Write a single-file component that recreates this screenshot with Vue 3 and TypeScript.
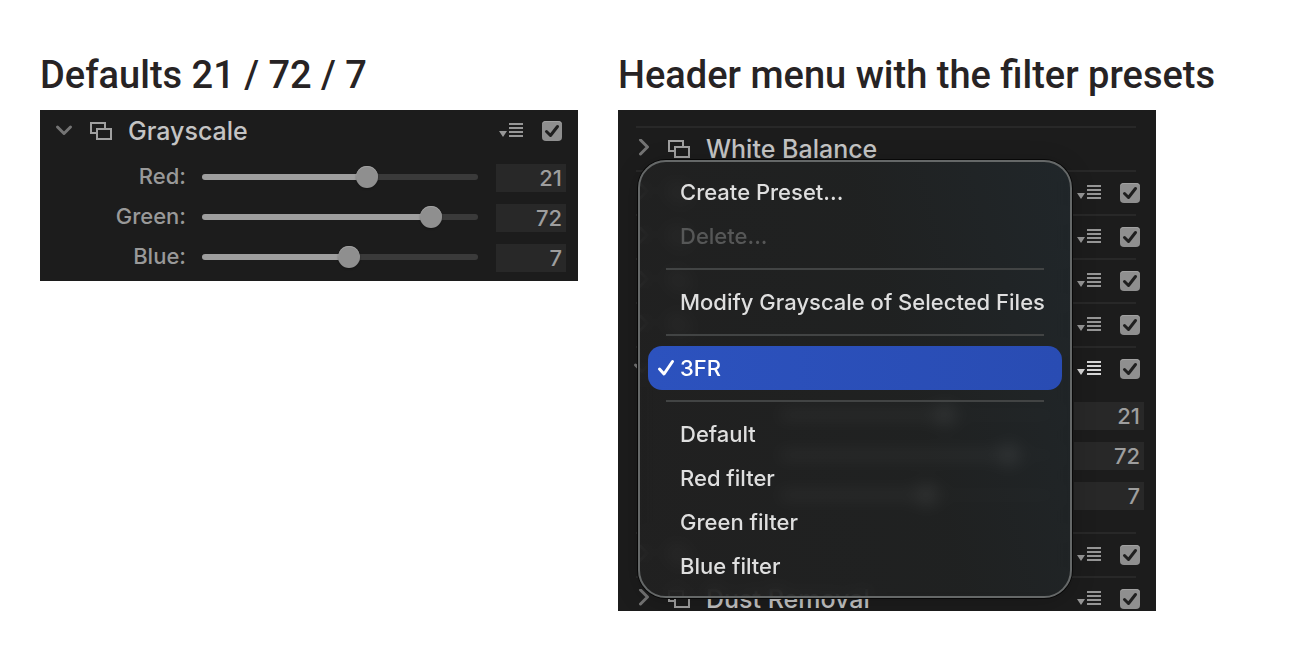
<script setup lang="ts">
import { reactive } from 'vue'

interface Channel {
  name: string
  value: number
}

interface Module {
  id: string
  title?: string
  open?: boolean
  active?: boolean
  bare?: boolean
  enabled: boolean
  labelled?: boolean
  channels?: Channel[]
}

interface Figure {
  id: string
  heading: string
  ruled: boolean
  menu: boolean
  modules: Module[]
}

interface MenuEntry {
  label: string
  disabled?: boolean
  checked?: boolean
}

const MIN = -100
const MAX = 100

const defaults = (): Channel[] => [
  { name: 'Red', value: 21 },
  { name: 'Green', value: 72 },
  { name: 'Blue', value: 7 },
]

const figures = reactive<Figure[]>([
  {
    id: 'defaults',
    heading: 'Defaults 21 / 72 / 7',
    ruled: false,
    menu: false,
    modules: [
      { id: 'gray', title: 'Grayscale', open: true, enabled: true, labelled: true, channels: defaults() },
    ],
  },
  {
    id: 'presets',
    heading: 'Header menu with the filter presets',
    ruled: true,
    menu: true,
    modules: [
      { id: 'wb', title: 'White Balance', bare: true, enabled: true },
      { id: 'm2', enabled: true },
      { id: 'm3', enabled: true },
      { id: 'm4', enabled: true },
      { id: 'm5', enabled: true },
      { id: 'gray', open: true, active: true, enabled: true, channels: defaults() },
      { id: 'm7', enabled: true },
      { id: 'dust', title: 'Dust Removal', enabled: true },
    ],
  },
])

const menuGroups: MenuEntry[][] = [
  [{ label: 'Create Preset...' }, { label: 'Delete...', disabled: true }],
  [{ label: 'Modify Grayscale of Selected Files' }],
  [{ label: '3FR', checked: true }],
  [{ label: 'Default' }, { label: 'Red filter' }, { label: 'Green filter' }, { label: 'Blue filter' }],
]

const fill = (value: number) => `${((value - MIN) / (MAX - MIN)) * 100}%`
</script>

<template>
  <main class="page">
    <section v-for="figure in figures" :key="figure.id" class="figure">
      <h2 class="heading">{{ figure.heading }}</h2>
      <div class="panel" :class="{ ruled: figure.ruled }">
        <div v-for="mod in figure.modules" :key="mod.id" class="module">
          <header class="bar">
            <button type="button" class="icon-button toggle" :aria-expanded="!!mod.open" aria-label="Toggle section">
              <svg v-if="mod.open" width="20" height="20" viewBox="0 0 20 20">
                <path d="M3.5 6 L10 12.5 L16.5 6" />
              </svg>
              <svg v-else width="20" height="20" viewBox="0 0 20 20">
                <path d="M8.5 1 L15.5 8 L8.5 15" />
              </svg>
            </button>
            <svg class="layers" width="22" height="18" viewBox="0 0 22 18" aria-hidden="true">
              <path d="M15 6 V1 H1 V11 H6" />
              <rect x="7" y="7" width="14" height="10" />
            </svg>
            <h3 class="title">{{ mod.title }}</h3>
            <template v-if="!mod.bare">
              <button type="button" class="icon-button presets" :class="{ active: mod.active }" aria-label="Presets">
                <svg width="24" height="16" viewBox="0 0 24 16">
                  <path d="M0 8 H8 L4 14 Z M10 0 H24 V2 H10 Z M10 4 H24 V6 H10 Z M10 8 H24 V10 H10 Z M10 12 H24 V14 H10 Z" />
                </svg>
              </button>
              <label class="tick">
                <input v-model="mod.enabled" type="checkbox" aria-label="Enable section" />
                <svg width="20" height="20" viewBox="0 0 20 20" aria-hidden="true">
                  <path d="M4.5 10.5 L8.5 14.5 L15.5 5.5" />
                </svg>
              </label>
            </template>
          </header>

          <div v-if="mod.channels" class="channels">
            <div v-for="channel in mod.channels" :key="channel.name" class="channel">
              <label class="name" :for="`${figure.id}-${channel.name}`">
                <template v-if="mod.labelled">{{ channel.name }}:</template>
              </label>
              <input
                :id="`${figure.id}-${channel.name}`"
                v-model.number="channel.value"
                class="slider"
                type="range"
                :min="MIN"
                :max="MAX"
                :aria-label="channel.name"
                :style="{ '--fill': fill(channel.value) }"
              />
              <input v-model.number="channel.value" class="value" type="text" :aria-label="`${channel.name} value`" />
            </div>
          </div>
        </div>

        <div v-if="figure.menu" class="menu" role="menu">
          <div v-for="(group, index) in menuGroups" :key="index" class="group" role="group">
            <button
              v-for="entry in group"
              :key="entry.label"
              type="button"
              role="menuitem"
              class="entry"
              :class="{ selected: entry.checked }"
              :disabled="entry.disabled"
            >
              <svg v-if="entry.checked" class="mark" width="18" height="20" viewBox="0 0 18 20" aria-hidden="true">
                <path d="M2.5 11 L7 16 L15.5 3.5" />
              </svg>
              {{ entry.label }}
            </button>
          </div>
        </div>
      </div>
    </section>
  </main>
</template>

<style>
body {
  margin: 0;
  background: #ffffff;
}
</style>

<style scoped>
.page {
  display: flex;
  align-items: flex-start;
  gap: 40px;
  padding: 50px 40px 40px;
  font-family: Inter, "Liberation Sans", sans-serif;
}

.figure {
  flex: 1 1 0;
  min-width: 0;
  max-width: 538px;
}

.heading {
  margin: 0 0 10px;
  color: #272324;
  font-family: Roboto, "Liberation Sans", sans-serif;
  font-size: 38px;
  font-weight: 500;
  line-height: 50px;
  white-space: nowrap;
}

.panel {
  position: relative;
  overflow: hidden;
  padding-bottom: 3px;
  background: #1c1c1c;
}

.panel.ruled {
  padding-top: 16px;
  padding-bottom: 0;
}

.ruled .module::before {
  content: "";
  display: block;
  height: 2px;
  margin: 0 20px 0 18px;
  background: #282828;
}

.ruled .module:nth-last-child(2) {
  margin-bottom: -9px;
}

.bar {
  display: flex;
  align-items: center;
  height: 42px;
  padding: 0 16px 0 14px;
}

.icon-button {
  display: flex;
  padding: 0;
  border: 0;
  background: none;
}

.toggle svg {
  fill: none;
  stroke: #747474;
  stroke-width: 3;
  stroke-linecap: round;
  stroke-linejoin: round;
}

.layers {
  margin: 0 16px;
  fill: none;
  stroke: #a0a0a0;
  stroke-width: 2;
}

.title {
  flex: 1;
  margin: 0;
  color: #c4c4c4;
  font-size: 25px;
  font-weight: 500;
  line-height: 32px;
}

.presets {
  margin-right: 19px;
  fill: #969696;
}

.presets.active {
  fill: #d6d6d6;
}

.tick {
  display: grid;
}

.tick input,
.tick svg {
  grid-area: 1 / 1;
}

.tick input {
  appearance: none;
  width: 20px;
  height: 20px;
  margin: 0;
  border-radius: 4px;
  background: #8f8f8f;
  box-shadow: inset 0 1px 0 #a2a2a2;
}

.tick svg {
  fill: none;
  stroke: #1f1f1f;
  stroke-width: 3;
  stroke-linecap: round;
  stroke-linejoin: round;
  pointer-events: none;
}

.tick input:not(:checked) + svg {
  visibility: hidden;
}

.channels {
  padding-top: 6px;
}

.ruled .channels {
  padding-bottom: 16px;
}

.channel {
  display: grid;
  grid-template-columns: 146px 1fr 70px;
  align-items: center;
  column-gap: 16px;
  height: 40px;
  padding-right: 12px;
}

.name {
  padding-bottom: 4px;
  color: #999999;
  font-size: 22px;
  font-weight: 500;
  line-height: 28px;
  text-align: right;
}

.slider {
  appearance: none;
  width: calc(100% - 2px);
  height: 22px;
  margin: 0 0 2px;
  background: none;
}

.slider::-webkit-slider-runnable-track {
  height: 6px;
  border-radius: 3px;
  background: linear-gradient(to right, #9e9e9e var(--fill), #3a3a3a var(--fill));
}

.slider::-webkit-slider-thumb {
  appearance: none;
  width: 22px;
  height: 22px;
  margin-top: -8px;
  border-radius: 50%;
  background: #8f8f8f;
  box-shadow: inset 0 1px 0 #a2a2a2, 0 1px 2px rgba(0, 0, 0, 0.3);
}

.value {
  box-sizing: border-box;
  width: 100%;
  height: 28px;
  padding: 0 4px;
  border: 0;
  background: #282828;
  color: #9e9e9e;
  font: 500 22px/28px Inter, "Liberation Sans", sans-serif;
  text-align: right;
}

.menu {
  position: absolute;
  top: 50px;
  left: 20px;
  right: 84px;
  box-sizing: border-box;
  padding: 8px;
  border: 2px solid #656868;
  border-radius: 28px;
  background: linear-gradient(75deg, rgba(33, 33, 33, 0.86) 10%, rgba(32, 34, 34, 0.86) 60%, rgba(33, 40, 44, 0.86));
  backdrop-filter: blur(8px);
  box-shadow: 0 0 0 1px #080808, 0 4px 24px rgba(0, 0, 0, 0.2);
}

.group + .group::before {
  content: "";
  display: block;
  height: 2px;
  margin: 10px 18px;
  background: #424444;
}

.entry {
  position: relative;
  display: block;
  width: 100%;
  height: 44px;
  padding: 0 0 0 32px;
  border: 0;
  border-radius: 14px;
  background: none;
  color: #dfdfdf;
  font: 500 22px/44px Inter, "Liberation Sans", sans-serif;
  text-align: left;
  white-space: nowrap;
}

.entry:disabled {
  color: #565757;
}

.entry.selected {
  background: linear-gradient(to right, #2c52be, #294cb3);
  color: #ffffff;
}

.mark {
  position: absolute;
  top: 12px;
  left: 9px;
  fill: none;
  stroke: #ffffff;
  stroke-width: 3;
  stroke-linecap: round;
  stroke-linejoin: round;
}
</style>
